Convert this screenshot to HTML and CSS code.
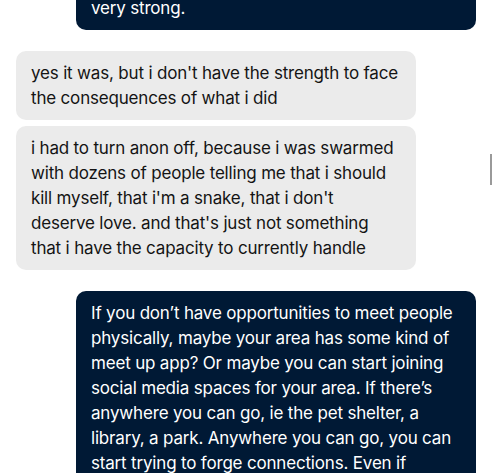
FILE: index.html
```html
<!DOCTYPE html>
<html>
<head>
<meta charset="utf-8">
<link rel="stylesheet" href="styles.css">
</head>
<body>
<div class="chat">
  <div class="msg sent first">very strong.</div>
  <div class="msg recv">yes it was, but i don't have the strength to face the consequences of what i did</div>
  <div class="msg recv follow">i had to turn anon off, because i was swarmed with dozens of people telling me that i should kill myself, that i'm a snake, that i don't deserve love. and that's just not something that i have the capacity to currently handle</div>
  <div class="msg sent">If you don’t have opportunities to meet people physically, maybe your area has some kind of meet up app? Or maybe you can start joining social media spaces for your area. If there’s anywhere you can go, ie the pet shelter, a library, a park. Anywhere you can go, you can start trying to forge connections. Even if making friends feels hard right now, there are always people who will accept you.</div>
</div>
<div class="scrollbar"></div>
</body>
</html>
```
FILE: styles.css
```css
html, body {
  margin: 0;
  padding: 0;
  background: #ffffff;
  overflow: hidden;
  height: 473px;
}
.chat {
  display: flex;
  flex-direction: column;
  padding: 0 19px 0 16px;
  margin-top: -14px;
}
.msg {
  width: 400px;
  box-sizing: border-box;
  padding: 9.5px 15px;
  border-radius: 10px;
  font-family: Inter, "Liberation Sans", sans-serif;
  font-size: 17px;
  line-height: 25px;
  letter-spacing: -0.18px;
  margin-top: 21px;
}
.msg.first { margin-top: 0; }
.msg.follow { margin-top: 6px; }
.sent {
  align-self: flex-end;
  background: #001935;
  color: #ffffff;
}
.recv {
  align-self: flex-start;
  background: #ebebeb;
  color: #141414;
}
.scrollbar {
  position: fixed;
  left: 490px;
  top: 154px;
  width: 2px;
  height: 31px;
  background: #9a9a9a;
}
```
